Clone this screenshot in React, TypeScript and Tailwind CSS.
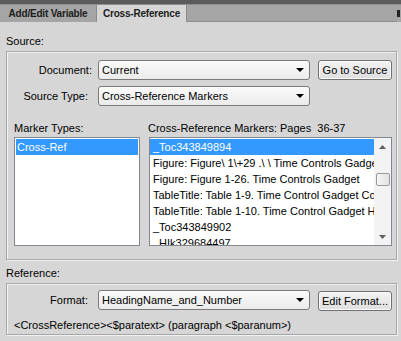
import React from "react";

const Select = ({ value }: { value: string }) => (
  <div className="flex h-[20px] w-[212px] items-center justify-between rounded-[3px] border border-[#7a7a7a] bg-gradient-to-b from-[#fbfbfb] to-[#ebebeb] pl-[3px] pr-[5px]">
    <span className="truncate">{value}</span>
    <svg width="8" height="4" viewBox="0 0 8 4">
      <path d="M0 0h8L4 4z" fill="#000" />
    </svg>
  </div>
);

const Button = ({ label }: { label: string }) => (
  <div className="flex h-[20px] w-[74px] items-center justify-center rounded-[3px] border border-[#707070] bg-gradient-to-b from-[#f4f4f4] to-[#dedede] shadow-[inset_0_0_0_1px_#fbfbfb]">
    {label}
  </div>
);

const GroupBox = ({ children }: { children: React.ReactNode }) => (
  <div className="mx-[6px] w-[391px] border border-[#a6a6a6] shadow-[1px_1px_0_#f2f2f2,inset_1px_1px_0_#f2f2f2]">
    {children}
  </div>
);

const markers = [
  "_Toc343849894",
  "Figure: Figure\\ 1\\+29 .\\ \\ Time Controls Gadget",
  "Figure: Figure 1-26. Time Controls Gadget",
  "TableTitle: Table 1-9. Time Control Gadget Components",
  "TableTitle: Table 1-10. Time Control Gadget Hotkeys",
  "_Toc343849902",
  "_HIk329684497",
];

const Scrollbar = () => (
  <div className="flex h-full w-[17px] flex-col items-center bg-[#f3f3f3]">
    <div className="flex h-[17px] w-full items-center justify-center">
      <svg width="7" height="4" viewBox="0 0 7 4">
        <path d="M0 4h7L3.5 0z" fill="#606060" />
      </svg>
    </div>
    <div className="mt-[18px] h-[13px] w-[14px] rounded-[2px] border border-[#9a9a9a] bg-gradient-to-r from-[#f6f6f6] to-[#e2e2e2]" />
    <div className="flex-1" />
    <div className="flex h-[17px] w-full items-center justify-center">
      <svg width="7" height="4" viewBox="0 0 7 4">
        <path d="M0 0h7L3.5 4z" fill="#606060" />
      </svg>
    </div>
  </div>
);

export default function App() {
  return (
    <div className="h-[341px] w-[401px] overflow-hidden bg-[#d6d6d6] font-['Liberation_Sans',Arial,sans-serif] text-[11px] leading-[14px] text-black">
      <div className="h-[4px] bg-[#5b5b5b]" />
      <div className="flex h-[18px] items-stretch border-t border-[#8e8e8e] bg-[#a5a5a5]">
        <div className="flex w-[97px] items-center justify-center border-r border-[#8a8a8a] text-[10px] font-bold tracking-[-0.2px] text-[#1c1c1c]">
          Add/Edit Variable
        </div>
        <div className="flex w-[90px] items-center justify-center border-r border-[#8a8a8a] bg-[#d6d6d6] text-[10px] font-bold tracking-[-0.2px] text-[#1c1c1c]">
          Cross-Reference
        </div>
        <div className="flex-1 border-b border-[#8e8e8e]" />
        <div className="my-[5px] mr-[1px] w-[3px] bg-[#222]" />
      </div>

      <div className="mt-[12px] pl-[6px]">Source:</div>
      <div className="mt-[3px]">
        <GroupBox>
          <div className="mt-[8px] flex items-center">
            <div className="w-[85px] text-right">Document:</div>
            <div className="ml-[6px]">
              <Select value="Current" />
            </div>
            <div className="ml-[8px]">
              <Button label="Go to Source" />
            </div>
          </div>
          <div className="mt-[6px] flex items-center">
            <div className="w-[81px] text-right">Source Type:</div>
            <div className="ml-[10px]">
              <Select value="Cross-Reference Markers" />
            </div>
          </div>
          <div className="mt-[15px] flex">
            <div className="w-[141px] pl-[7px]">Marker Types:</div>
            <div>Cross-Reference Markers: Pages&nbsp; 36-37</div>
          </div>
          <div className="mt-[2px] mb-[13px] flex h-[109px]">
            <div className="ml-[7px] h-full w-[126px] border border-[#828790] bg-white p-[1px]">
              <div className="flex h-[16px] items-center bg-[#3399ff] pl-[1px] text-white">
                Cross-Ref
              </div>
            </div>
            <div className="ml-[9px] flex h-full w-[243px] border border-[#828790] bg-white">
              <div className="flex-1 overflow-hidden pt-[1px]">
                {markers.map((m, i) => (
                  <div
                    key={m}
                    className={
                      i === 0
                        ? "flex h-[16px] items-center whitespace-nowrap bg-[#3399ff] pl-[3px] text-white"
                        : "flex h-[16px] items-center whitespace-nowrap pl-[3px]"
                    }
                  >
                    {m}
                  </div>
                ))}
              </div>
              <Scrollbar />
            </div>
          </div>
        </GroupBox>
      </div>

      <div className="mt-[6px] pl-[6px]">Reference:</div>
      <div className="mt-[3px]">
        <GroupBox>
          <div className="mt-[5px] flex items-center">
            <div className="w-[81px] text-right">Format:</div>
            <div className="ml-[10px]">
              <Select value="HeadingName_and_Number" />
            </div>
            <div className="ml-[8px] mt-[2px]">
              <Button label="Edit Format..." />
            </div>
          </div>
          <div className="mt-[7px] mb-[2px] pl-[7px]">
            &lt;CrossReference&gt;&lt;$paratext&gt; (paragraph &lt;$paranum&gt;)
          </div>
        </GroupBox>
      </div>
    </div>
  );
}
